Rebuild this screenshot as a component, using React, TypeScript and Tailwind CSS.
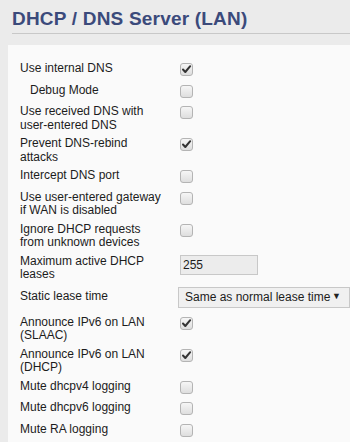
import React from "react";

function Check({ on }: { on?: boolean }) {
  return (
    <div className="mt-[1px] w-[13px] h-[13px] rounded-[3px] border border-[#b4b4b4] bg-gradient-to-b from-[#f6f6f6] to-[#dedede] flex items-center justify-center">
      {on ? (
        <svg width="11" height="11" viewBox="0 0 11 11">
          <path d="M2 5.5 L4.3 8 L9.2 2.2" fill="none" stroke="#333" strokeWidth="2" strokeLinecap="round" strokeLinejoin="round" />
        </svg>
      ) : null}
    </div>
  );
}

type Row = { label: React.ReactNode; on?: boolean; indent?: boolean };

function CheckRow({ label, on, indent }: Row) {
  return (
    <div className="flex items-start pt-[3px] pb-[2px]">
      <div className={"w-[160px] leading-[13.5px] min-h-[16.5px] " + (indent ? "pl-[10px]" : "")}>{label}</div>
      <Check on={on} />
    </div>
  );
}

export default function App() {
  return (
    <div
      className="w-[350px] h-[442px] overflow-hidden bg-[#ebebeb] text-[12px] text-[#1c1c1c]"
      style={{ fontFamily: '"Liberation Sans", Arial, sans-serif' }}
    >
      <div className="pl-[12px] pt-[7px]">
        <h1 className="text-[19px] font-bold leading-[24px] tracking-[0.2px] text-[#3b4a7b]">DHCP / DNS Server (LAN)</h1>
        <div className="mt-[2px] h-px bg-[#c8c8c8]" />
      </div>
      <div className="ml-[8px] mt-[11px] bg-[#fafafa] h-[400px] pl-[12px] pt-[14px]">
        <CheckRow label="Use internal DNS" on />
        <CheckRow label="Debug Mode" indent />
        <CheckRow label={<>Use received DNS with<br />user-entered DNS</>} />
        <CheckRow label={<>Prevent DNS-rebind<br />attacks</>} on />
        <CheckRow label="Intercept DNS port" />
        <CheckRow label={<>Use user-entered gateway<br />if WAN is disabled</>} />
        <CheckRow label={<>Ignore DHCP requests<br />from unknown devices</>} />
        <div className="flex items-start pt-[3px] pb-[2px]">
          <div className="w-[160px] leading-[13.5px] min-h-[16.5px]">Maximum active DHCP<br />leases</div>
          <div className="w-[78px] h-[20px] border border-[#c8c8c8] bg-[#ececec] pl-[2px] leading-[18px]">255</div>
        </div>
        <div className="flex items-center pt-[3px] pb-[5px]">
          <div className="w-[160px] leading-[13.5px]">Static lease time</div>
          <div className="w-[172px] shrink-0 h-[21px] border border-[#c8c8c8] bg-[#f0f0f0] pl-[6px] pr-[8px] flex items-center justify-between">
            <span>Same as normal lease time</span>
            <span className="text-[9px] text-[#222]">▼</span>
          </div>
        </div>
        <CheckRow label={<>Announce IPv6 on LAN<br />(SLAAC)</>} on />
        <CheckRow label={<>Announce IPv6 on LAN<br />(DHCP)</>} on />
        <CheckRow label="Mute dhcpv4 logging" />
        <CheckRow label="Mute dhcpv6 logging" />
        <CheckRow label="Mute RA logging" />
      </div>
    </div>
  );
}
